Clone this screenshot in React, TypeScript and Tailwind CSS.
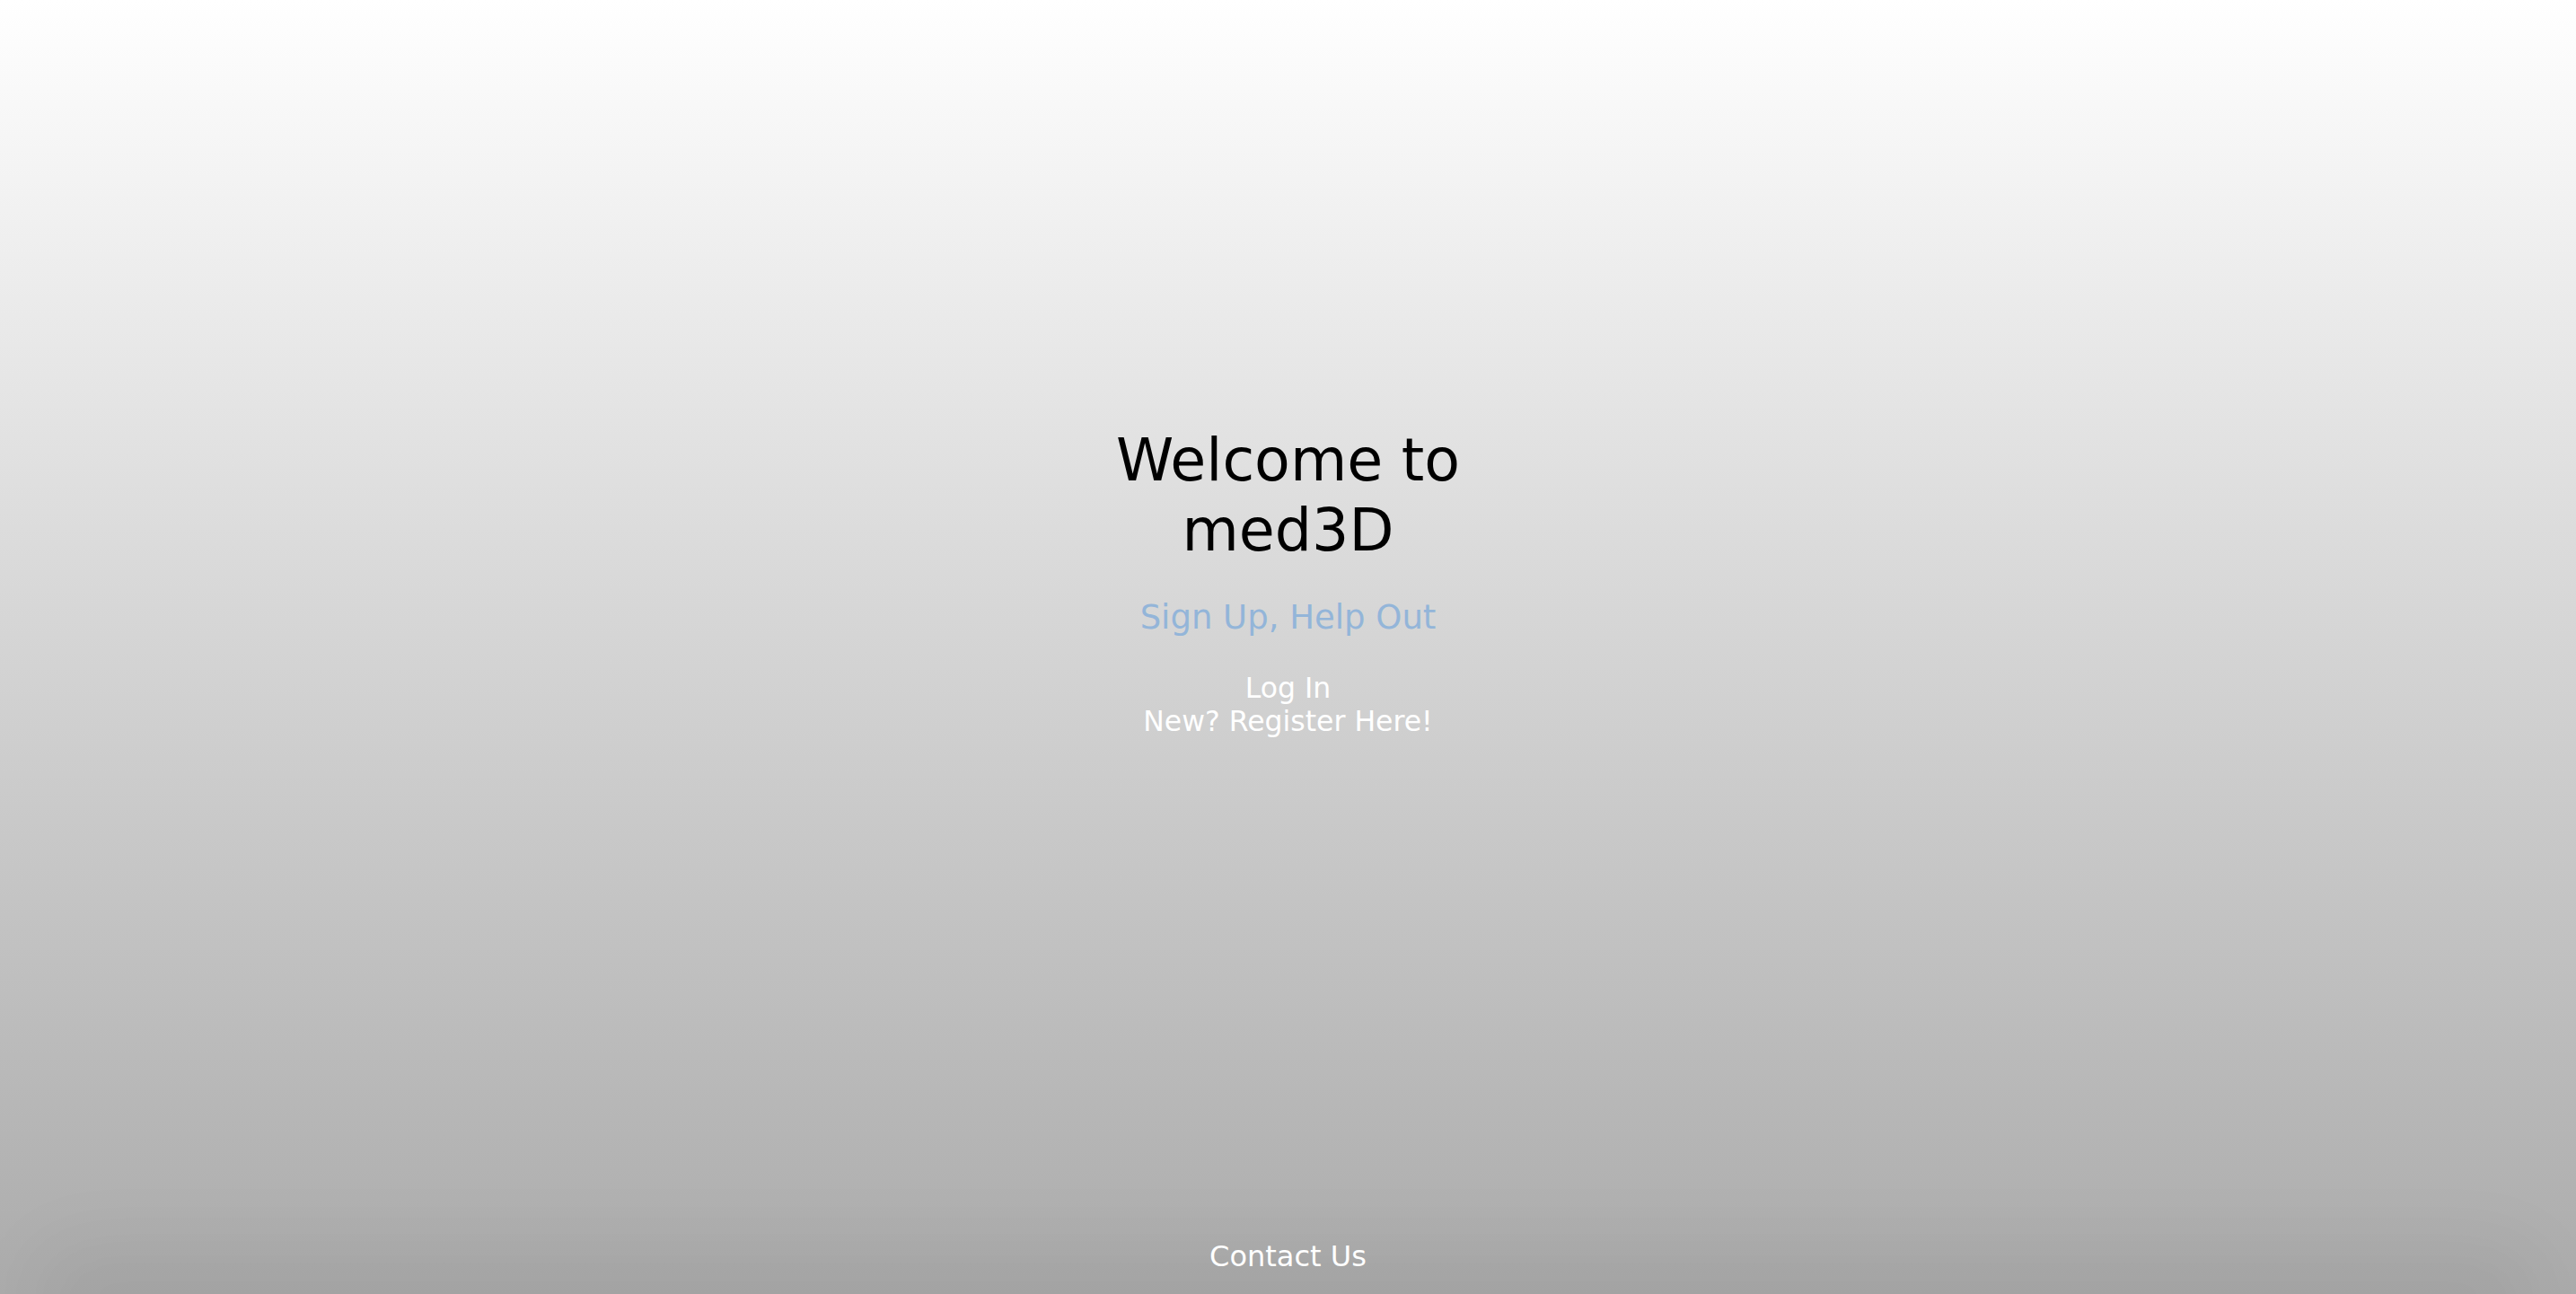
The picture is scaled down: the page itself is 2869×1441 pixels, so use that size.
import React from 'react';

const App: React.FC = () => {
  return (
    <div
      className="min-h-screen flex flex-col bg-gradient-to-b from-[#ffffff] to-[#ababab] text-center overflow-hidden"
      style={{ fontFamily: '"DejaVu Sans", sans-serif' }}
    >
      <main className="flex-1 flex flex-col items-center pt-[474px]">
        <h1 className="text-[65px] leading-[78px] font-normal text-black">
          Welcome to
          <br />
          med3D
        </h1>

        <h2 className="mt-[35px] text-[37px] leading-[45px] text-[#93b5d9]">Sign Up, Help Out</h2>

        {/* Auth links */}
        <div className="mt-[38px] flex flex-col text-[31.5px] leading-[37px] text-white">
          <a href="#login">Log In</a>
          <a href="#register">New? Register Here!</a>
        </div>
      </main>

      <footer className="relative pt-[20px] pb-[23px]">
        <div className="pointer-events-none absolute left-[40px] right-[40px] top-[30px] -bottom-[60px] rounded-[60px] bg-black/[0.05] blur-2xl" />
        <a href="#contact" className="relative text-[32px] leading-[38px] text-white">
          Contact Us
        </a>
      </footer>
    </div>
  );
};

export default App;
